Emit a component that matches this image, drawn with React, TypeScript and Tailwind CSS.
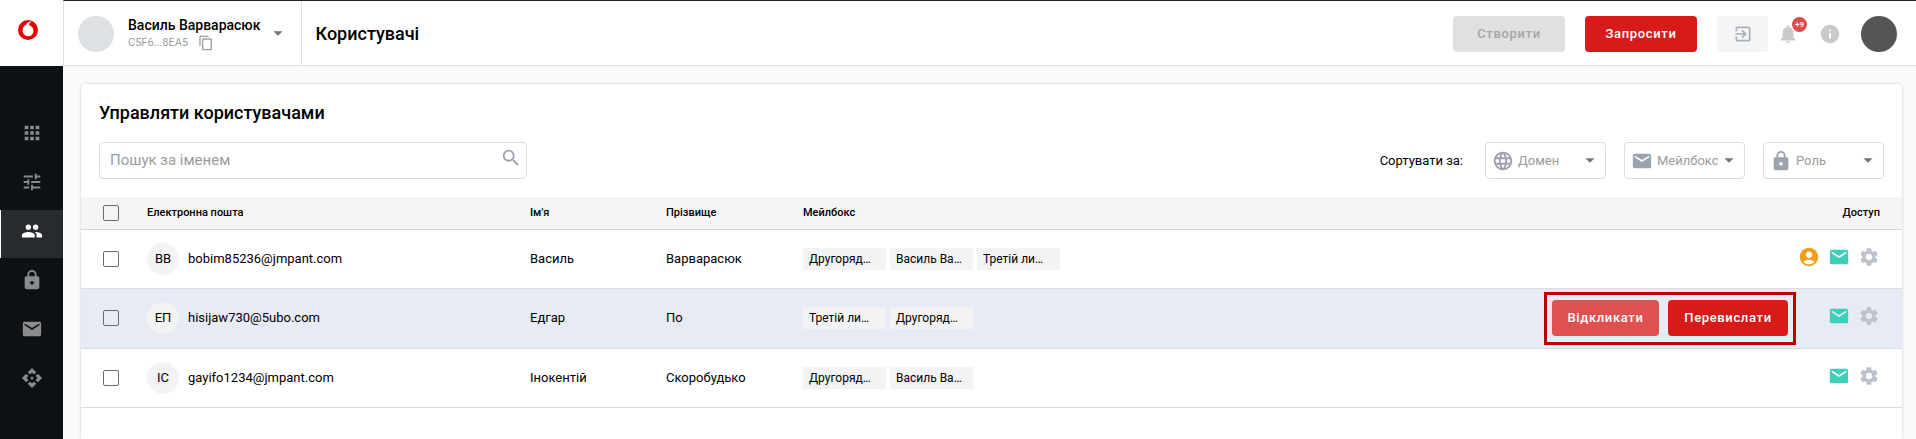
import type { ReactNode } from 'react';
import type { IconType } from 'react-icons';
import {
  MdAccountCircle,
  MdApi,
  MdApps,
  MdArrowDropDown,
  MdContentCopy,
  MdEmail,
  MdExitToApp,
  MdInfo,
  MdLanguage,
  MdLock,
  MdNotifications,
  MdPeople,
  MdSearch,
  MdSettings,
  MdTune,
} from 'react-icons/md';

type User = {
  email: string;
  initials: string;
  firstName: string;
  lastName: string;
  mailboxes: string[];
  owner?: boolean;
  pending?: boolean;
};

const users: User[] = [
  {
    email: 'bobim85236@jmpant.com',
    initials: 'ВВ',
    firstName: 'Василь',
    lastName: 'Варварасюк',
    mailboxes: ['Другоряд…', 'Василь Ва…', 'Третій ли…'],
    owner: true,
  },
  {
    email: 'hisijaw730@5ubo.com',
    initials: 'ЕП',
    firstName: 'Едгар',
    lastName: 'По',
    mailboxes: ['Третій ли…', 'Другоряд…'],
    pending: true,
  },
  {
    email: 'gayifo1234@jmpant.com',
    initials: 'ІС',
    firstName: 'Інокентій',
    lastName: 'Скоробудько',
    mailboxes: ['Другоряд…', 'Василь Ва…'],
  },
];

const navigation: { label: string; icon: IconType; active?: boolean }[] = [
  { label: 'Застосунки', icon: MdApps },
  { label: 'Налаштування', icon: MdTune },
  { label: 'Користувачі', icon: MdPeople, active: true },
  { label: 'Безпека', icon: MdLock },
  { label: 'Пошта', icon: MdEmail },
  { label: 'API', icon: MdApi },
];

function Logo() {
  return (
    <svg viewBox="0 0 20 20" className="size-5" aria-hidden="true">
      <circle cx="10" cy="10" r="10" fill="#e60000" />
      <path
        d="M14 1.1C11.2 1.3 9.2 2.9 8.1 4.6C6 5.6 4.6 7.9 4.6 10.6C4.6 14 7.1 16.3 10.1 16.3C13.2 16.3 15.5 14 15.5 10.9C15.5 7.8 13.6 5.9 11.1 5.2C11.2 3.4 12.2 1.9 14 1.1Z"
        fill="#fff"
      />
    </svg>
  );
}

function Sidebar() {
  return (
    <aside className="flex w-[63px] shrink-0 flex-col bg-[#0d1116]">
      <a href="#home" aria-label="Головна" className="flex h-[66px] items-center justify-center bg-white pr-2 pb-1.5">
        <Logo />
      </a>
      <nav className="flex flex-col gap-px pt-[46px]">
        {navigation.map(({ label, icon: Icon, active }) => (
          <a
            key={label}
            href={`#${label}`}
            aria-label={label}
            className={
              active
                ? 'flex h-12 items-center justify-center border-l border-white bg-[#272a2f] pb-1.5 text-white'
                : 'flex h-12 items-center justify-center border-l border-transparent pb-1.5 text-[#8a8b8c]'
            }
          >
            <Icon className="size-[22px]" />
          </a>
        ))}
      </nav>
    </aside>
  );
}

function ActionButton({ tone, children }: { tone: 'primary' | 'soft' | 'disabled'; children: ReactNode }) {
  const tones = {
    primary: 'bg-[#d71a1a] text-white',
    soft: 'bg-[#df5050] text-white',
    disabled: 'bg-[#e0e0e0] text-[#a6a6a6]',
  };
  return (
    <button
      type="button"
      disabled={tone === 'disabled'}
      className={`flex h-9 items-center justify-center rounded-sm text-[13px] font-medium tracking-wider ${tones[tone]}`}
    >
      {children}
    </button>
  );
}

function Header() {
  return (
    <header className="flex h-[66px] border-t border-b border-l border-t-[#242424] border-b-[#e0e0e0] border-l-[#e0e0e0] bg-white">
      <div className="flex shrink-0 items-center border-r border-[#e0e0e0] pt-0.5 pr-3 pl-3.5">
        <span className="size-9 rounded-full bg-[#dde1e4]" />
        <div className="ml-3.5 flex flex-col pb-0.5">
          <span className="text-sm leading-5 font-medium">Василь Варварасюк</span>
          <span className="flex h-4 items-center gap-2.5 text-[11px] text-[#9a9fa6]">
            C5F6...8EA5
            <button type="button" aria-label="Копіювати">
              <MdContentCopy className="size-4" />
            </button>
          </span>
        </div>
        <button type="button" aria-label="Змінити профіль" className="mb-0.5 ml-1.5 text-[#757575]">
          <MdArrowDropDown className="size-[22px]" />
        </button>
      </div>
      <h1 className="flex grow items-center pl-3.5 text-[18px] font-medium">Користувачі</h1>
      <div className="flex items-center pt-0.5 pr-[19px]">
        <div className="mr-5 grid w-28">
          <ActionButton tone="disabled">Створити</ActionButton>
        </div>
        <div className="mr-5 grid w-28">
          <ActionButton tone="primary">Запросити</ActionButton>
        </div>
        <button
          type="button"
          aria-label="Увійти"
          className="mr-[9px] flex h-9 w-[51px] items-center justify-center rounded-sm bg-[#f3f5f7] text-[#a9b1bb]"
        >
          <MdExitToApp className="size-5" />
        </button>
        <button type="button" aria-label="Сповіщення" className="relative mr-5 text-[#c9c9c9]">
          <MdNotifications className="size-[22px]" />
          <span className="absolute -top-1.5 -right-2 flex size-[15px] items-center justify-center rounded-full bg-[#df4a4a] text-[8px] font-medium text-white">
            +9
          </span>
        </button>
        <button type="button" aria-label="Довідка" className="mr-5 text-[#c9c9c9]">
          <MdInfo className="size-[22px]" />
        </button>
        <button type="button" aria-label="Обліковий запис" className="size-9 rounded-full bg-[#555]" />
      </div>
    </header>
  );
}

function Filter({ label, icon: Icon }: { label: string; icon: IconType }) {
  return (
    <label className="flex h-[37px] w-[121px] items-center rounded border border-[#dcdcdc] pr-1 pl-1.5">
      <Icon className="size-[22px] shrink-0 text-[#9ba3af]" />
      <select
        aria-label={label}
        className="min-w-0 grow appearance-none bg-transparent pl-1 text-[13px] text-[#9b9b9b] outline-none"
      >
        <option>{label}</option>
      </select>
      <MdArrowDropDown className="pointer-events-none mb-0.5 size-[22px] shrink-0 text-[#757575]" />
    </label>
  );
}

function Checkbox({ label }: { label: string }) {
  return (
    <input
      type="checkbox"
      aria-label={label}
      className="block size-4 appearance-none rounded-xs border border-[#6b6b6b] checked:bg-[#d71a1a]"
    />
  );
}

function UserRow({ user }: { user: User }) {
  return (
    <tr className={`h-[59px] border-b border-[#dcdcdc] ${user.pending ? 'bg-[#e7ebf4]' : ''}`}>
      <td className="pl-[22px]">
        <Checkbox label={user.email} />
      </td>
      <td>
        <div className="flex items-center gap-[9px]">
          <span className="flex size-8 items-center justify-center rounded-full bg-[#f3f3f3]">
            {user.initials}
          </span>
          {user.email}
        </div>
      </td>
      <td>{user.firstName}</td>
      <td>{user.lastName}</td>
      <td>
        <div className="flex gap-1">
          {user.mailboxes.map((mailbox) => (
            <span key={mailbox} className="h-[22px] w-[83px] bg-[#f3f3f3] px-1.5 text-xs leading-[22px]">
              {mailbox}
            </span>
          ))}
        </div>
      </td>
      <td>
        <div className="flex items-center justify-end gap-2 pr-[22px]">
          {user.pending && (
            <div className="my-[3px] mr-6 flex h-[53px] items-center gap-[9px] border-3 border-[#bf0000] px-[5px]">
              <div className="grid w-[107px]">
                <ActionButton tone="soft">Відкликати</ActionButton>
              </div>
              <div className="grid w-[120px]">
                <ActionButton tone="primary">Перевислати</ActionButton>
              </div>
            </div>
          )}
          {user.owner && <MdAccountCircle className="mb-1 size-[22px] text-[#f2a01c]" />}
          <MdEmail className="mb-1 size-[22px] text-[#3dcfba]" />
          <button type="button" aria-label="Налаштування" className="mb-1 text-[#bcc2cb]">
            <MdSettings className="size-[22px]" />
          </button>
        </div>
      </td>
    </tr>
  );
}

export default function App() {
  return (
    <div className="flex min-h-screen bg-[#fafafa] font-['Roboto',sans-serif] text-black">
      <Sidebar />
      <div className="flex min-w-0 grow flex-col">
        <Header />
        <main className="flex grow flex-col pt-[18px] pr-3.5 pl-[18px]">
          <section className="grow rounded-t bg-white shadow-[0_0_3px_rgba(0,0,0,0.2)]">
            <div className="px-[18px] pt-4 pb-[18px]">
              <h2 className="text-[18px] leading-[26px] font-medium">Управляти користувачами</h2>
              <div className="mt-4 flex items-center justify-between">
                <label className="flex h-[37px] w-[428px] items-center rounded border border-[#dcdcdc] pr-1 pl-2.5">
                  <input
                    type="text"
                    aria-label="Пошук за іменем"
                    placeholder="Пошук за іменем"
                    className="min-w-0 grow text-[15px] outline-none placeholder:text-[#9b9b9b]"
                  />
                  <MdSearch className="mb-1.5 size-[22px] text-[#9ba3af]" />
                </label>
                <div className="flex items-center gap-[18px]">
                  <span className="mr-1 text-[13px]">Сортувати за:</span>
                  <Filter label="Домен" icon={MdLanguage} />
                  <Filter label="Мейлбокс" icon={MdEmail} />
                  <Filter label="Роль" icon={MdLock} />
                </div>
              </div>
            </div>
            <table className="w-full table-fixed border-collapse text-left text-[13px]">
              <colgroup>
                <col className="w-[66px]" />
                <col className="w-[383px]" />
                <col className="w-[136px]" />
                <col className="w-[137px]" />
                <col />
                <col className="w-[400px]" />
              </colgroup>
              <thead>
                <tr className="h-8 border-b border-[#d4d6d8] bg-[#f3f5f7] text-[11px]">
                  <th className="pl-[22px]">
                    <Checkbox label="Вибрати всіх" />
                  </th>
                  <th className="font-medium">Електронна пошта</th>
                  <th className="font-medium">Ім'я</th>
                  <th className="font-medium">Прізвище</th>
                  <th className="font-medium">Мейлбокс</th>
                  <th className="pr-[22px] text-right font-medium">Доступ</th>
                </tr>
              </thead>
              <tbody>
                {users.map((user) => (
                  <UserRow key={user.email} user={user} />
                ))}
              </tbody>
            </table>
          </section>
        </main>
      </div>
    </div>
  );
}
